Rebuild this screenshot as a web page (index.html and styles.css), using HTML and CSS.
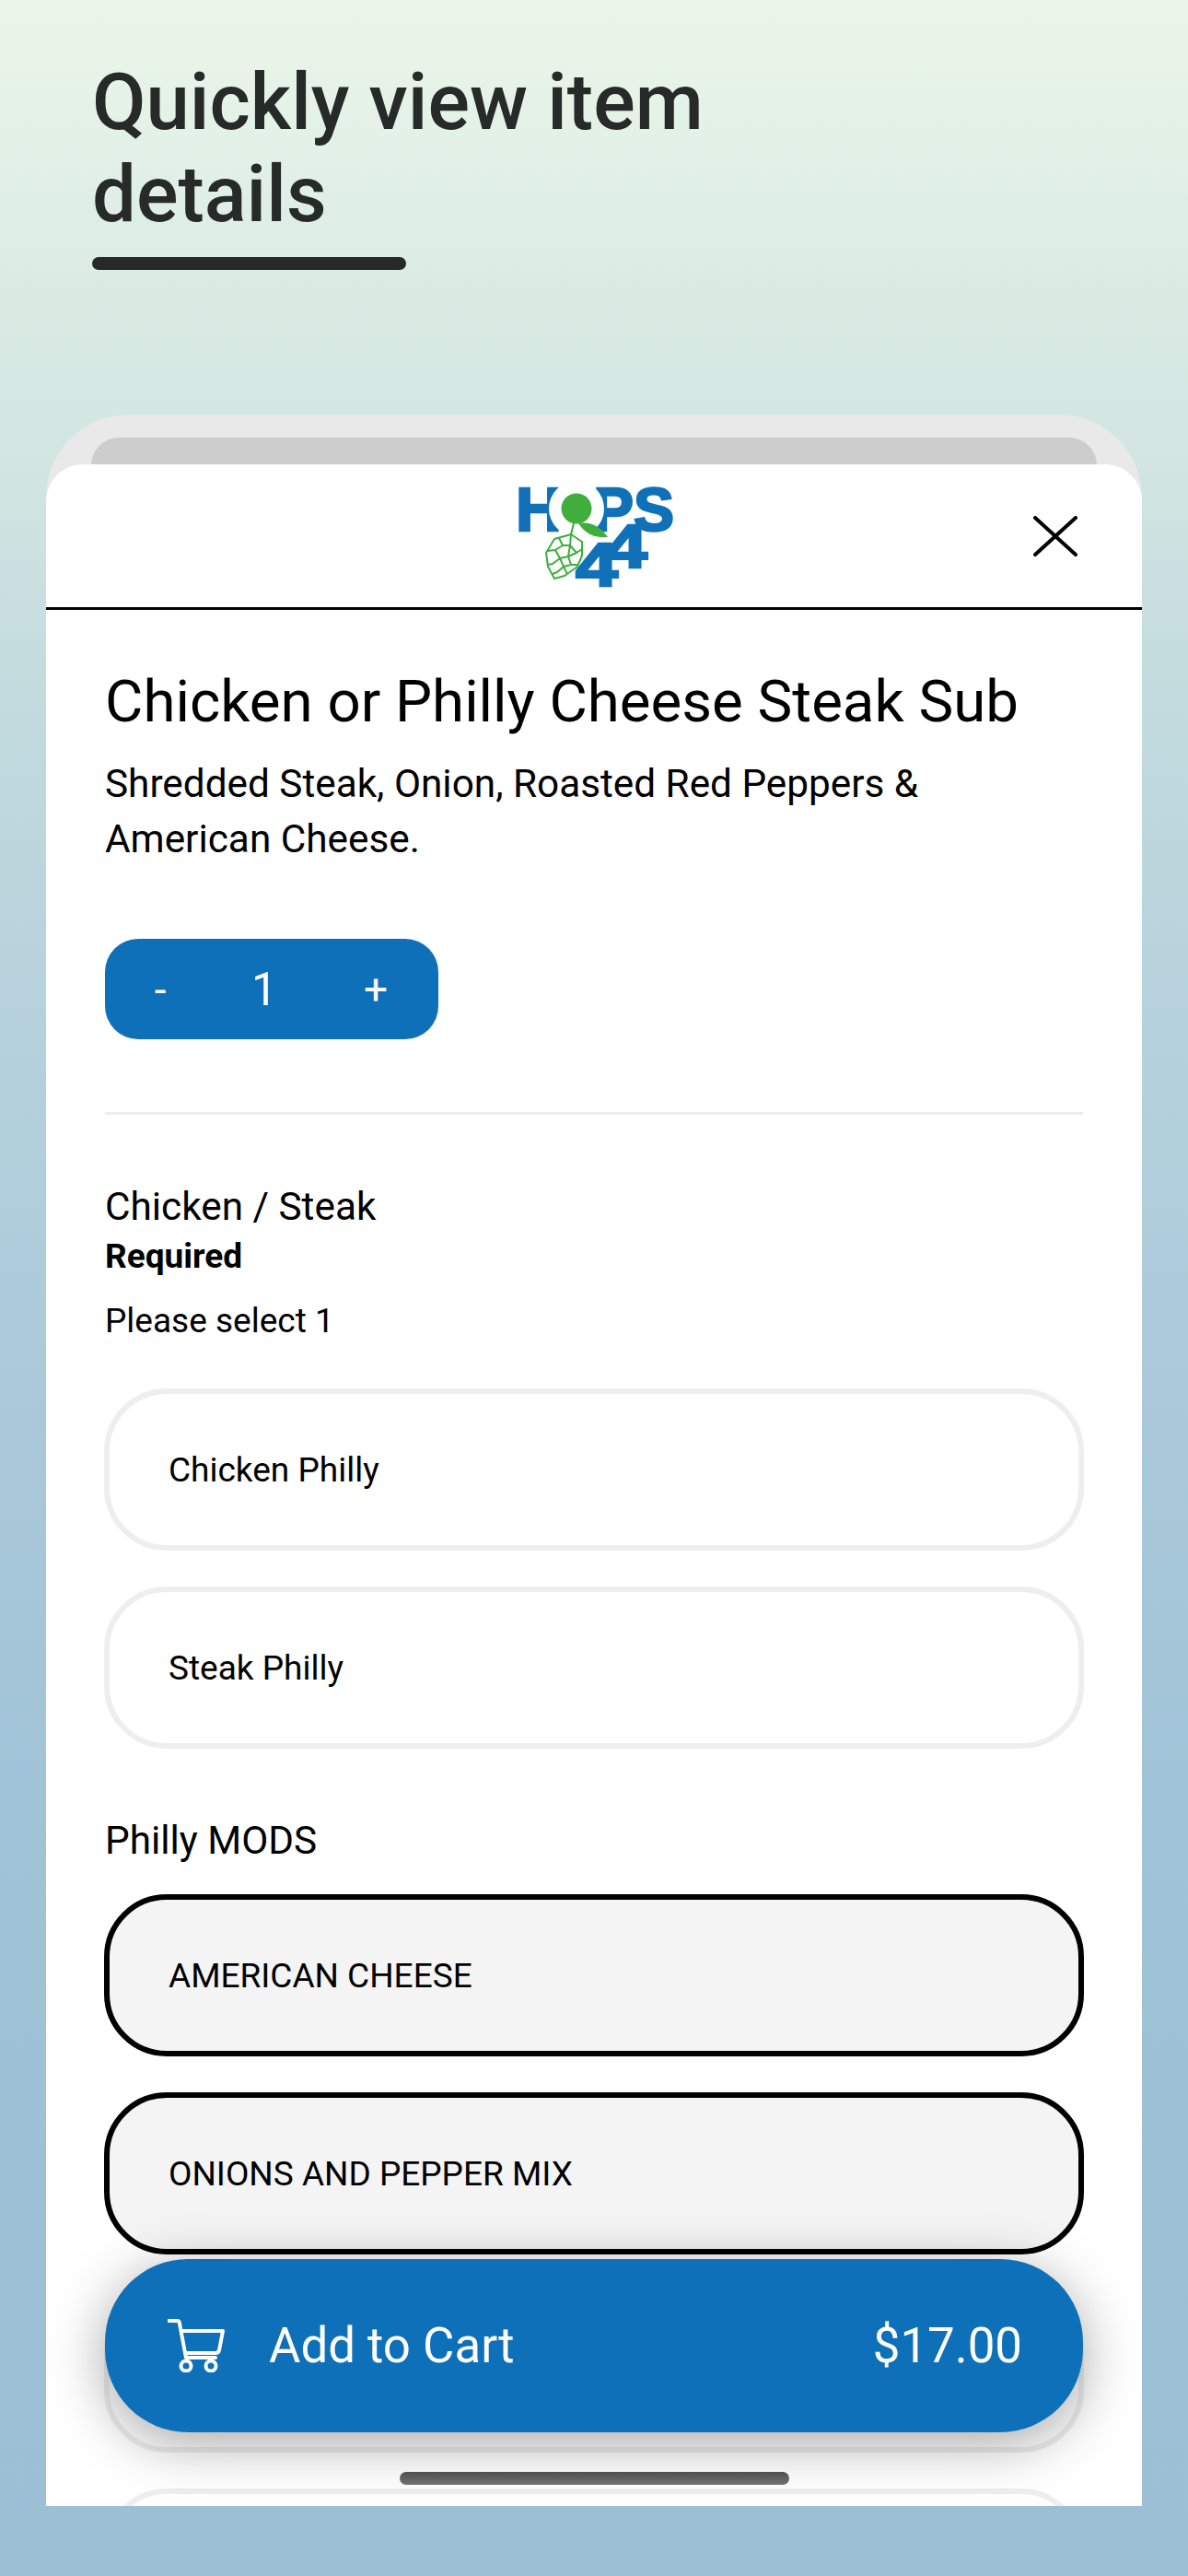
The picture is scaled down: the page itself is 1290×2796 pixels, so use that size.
FILE: index.html
```html
<!DOCTYPE html>
<html lang="en">
<head>
    <meta charset="UTF-8">
    <title>Quickly view item details</title>
    <link rel="stylesheet" href="styles.css">
</head>
<body>
    <header class="promo">
        <h1 class="promo-title">Quickly view item<br>details</h1>
        <div class="promo-rule"></div>
    </header>

    <div class="phone">
        <div class="phone-top">
            <div class="phone-bar"></div>
        </div>

        <main class="sheet">
            <div class="sheet-head">
                <svg class="logo" viewBox="0 0 190 120" width="190" height="120" aria-label="Hops 44">
                    <g class="logo-word">
                        <text x="10" y="56" textLength="50" lengthAdjust="spacingAndGlyphs">H</text>
                        <text x="94" y="56" textLength="88" lengthAdjust="spacingAndGlyphs">PS</text>
                    </g>
                    <circle cx="76" cy="32" r="30" fill="#fff"/>
                    <circle cx="76" cy="32" r="16.500" fill="#3fae3c"/>
                    <g class="logo-word">
                        <text class="logo-four" x="107" y="96" textLength="46" lengthAdjust="spacingAndGlyphs">4</text>
                        <text class="logo-four" x="75" y="116" textLength="46" lengthAdjust="spacingAndGlyphs">4</text>
                    </g>
                    <path class="logo-leaf" d="M78 48 C92 46 102 52 110 63 C96 64 86 60 78 48 Z"/>
                    <path class="logo-stem" d="M73 48 L70 60"/>
                    <g class="logo-cone">
                        <path d="M70 60 L82 68 L82 83 L77 95 L63 105 L52 108 L45 95 L43 80 L52 65 Z"/>
                        <path d="M57 64 L61 72 L69 72 L70 60 M69 72 L76 80 L82 76 M61 72 L53 77 L44 78 M53 77 L58 86 L67 84 L69 72 M67 84 L76 80 M67 84 L70 93 L78 93 M58 86 L50 92 L45 93 M58 86 L62 95 L70 93 M62 95 L55 101 L50 103 M62 95 L66 103"/>
                    </g>
                </svg>
                <button class="close" aria-label="Close">
                    <svg viewBox="0 0 48 44" width="48" height="44">
                        <path d="M2 2 L46 42 M46 2 L2 42"/>
                    </svg>
                </button>
            </div>

            <div class="sheet-body">
                <h2 class="item-title">Chicken or Philly Cheese Steak Sub</h2>
                <p class="item-desc">Shredded Steak, Onion, Roasted Red Peppers &amp; American Cheese.</p>

                <div class="stepper">
                    <span class="step-btn step-minus">-</span>
                    <span class="step-count">1</span>
                    <span class="step-btn step-plus">+</span>
                </div>

                <hr class="divider">

                <h3 class="group-title">Chicken / Steak</h3>
                <div class="group-required">Required</div>
                <div class="group-hint">Please select 1</div>

                <div class="options">
                    <div class="option">Chicken Philly</div>
                    <div class="option">Steak Philly</div>
                </div>

                <h3 class="group-title group-mods">Philly MODS</h3>

                <div class="options">
                    <div class="option selected">AMERICAN CHEESE</div>
                    <div class="option selected">ONIONS AND PEPPER MIX</div>
                    <div class="option"></div>
                    <div class="option"></div>
                </div>
            </div>

            <button class="cart-btn">
                <svg class="cart-icon" viewBox="0 0 62 58" width="62" height="58">
                    <path d="M1 2 H10 C12 2 13 3 13 5 L20 42 H52"/>
                    <path d="M15 13 H60 L56 34 C55.500 36 54 37 52 37 H19"/>
                    <circle cx="20" cy="51" r="5.500"/>
                    <circle cx="47" cy="51" r="5.500"/>
                </svg>
                <span class="cart-label">Add to Cart</span>
                <span class="cart-price">$17.00</span>
            </button>
            <div class="home-bar"></div>
        </main>
    </div>
</body>
</html>
```

FILE: styles.css
```css
* {
    box-sizing: border-box;
}

body {
    margin: 0;
    height: 2796px;
    overflow: hidden;
    font-family: Roboto, 'Liberation Sans', sans-serif;
    background: linear-gradient(to bottom, #ebf6e9 0%, #d0e4e1 19%, #c3dbde 27%, #b5d1dc 40%, #a9c9da 55%, #a1c3d7 70%, #9dc0d6 85%, #9cbfd5 100%);
    color: #000;
}

.promo {
    padding: 61px 0 0 100px;
    height: 450px;
}

.promo-title {
    margin: 0;
    font-size: 85px;
    line-height: 100px;
    font-weight: 500;
    color: #262a28;
}

.promo-rule {
    width: 341px;
    height: 14px;
    margin-top: 18px;
    border-radius: 7px;
    background: #262a28;
}

.phone {
    margin: 0 50px;
}

.phone-top {
    height: 100px;
    margin-bottom: -46px;
    padding: 25px 49px 0;
    border-radius: 90px 90px 0 0;
    background: #e9e9e9;
}

.phone-bar {
    height: 75px;
    border-radius: 30px 30px 0 0;
    background: #cdcdcd;
}

.sheet {
    position: relative;
    height: 2216px;
    overflow: hidden;
    border-radius: 40px 40px 0 0;
    background: #fff;
}

.sheet-head {
    position: relative;
    display: flex;
    justify-content: center;
    height: 158px;
    padding-top: 16px;
    border-bottom: 3px solid #000;
}

.logo-word text {
    font-family: 'Liberation Sans', sans-serif;
    font-weight: 700;
    font-size: 66px;
    fill: #1071b9;
    stroke: #1071b9;
    stroke-width: 2.500;
}

.logo-leaf {
    fill: #3fae3c;
}

.logo-stem {
    fill: none;
    stroke: #3fae3c;
    stroke-width: 2;
}

.logo-cone path {
    fill: #fff;
    stroke: #3fae3c;
    stroke-width: 2;
    stroke-linejoin: round;
}

.logo-cone path + path {
    fill: none;
}

.close {
    position: absolute;
    top: 56px;
    right: 70px;
    padding: 0;
    border: none;
    background: none;
}

.close svg {
    display: block;
}

.close path {
    fill: none;
    stroke: #000;
    stroke-width: 4;
    stroke-linecap: round;
}

.sheet-body {
    padding: 0 64px;
}

.item-title {
    margin: 64px 0 0;
    font-size: 63.600px;
    line-height: 72px;
    font-weight: 400;
}

.item-desc {
    margin: 23px 0 0;
    font-size: 42.300px;
    line-height: 60px;
}

.stepper {
    display: flex;
    align-items: center;
    width: 362px;
    height: 109px;
    margin-top: 78px;
    border-radius: 36px;
    background: #0e70b8;
    color: #fff;
}

.step-btn {
    font-size: 46px;
    line-height: 1;
    text-align: center;
}

.step-minus {
    width: 120px;
}

.step-count {
    flex: 1;
    font-size: 50px;
    text-align: center;
}

.step-plus {
    width: 136px;
}

.divider {
    height: 3px;
    margin: 79px 0 0;
    border: none;
    background: #eeeeee;
}

.group-title {
    margin: 76px 0 0;
    font-size: 42.300px;
    line-height: 48px;
    font-weight: 400;
}

.group-required {
    margin-top: 9px;
    font-size: 37px;
    line-height: 42px;
    font-weight: 700;
}

.group-hint {
    margin-top: 28px;
    font-size: 37px;
    line-height: 42px;
}

.options {
    display: flex;
    flex-direction: column;
    gap: 39px;
    margin: 52px -1px 0;
}

.option {
    display: flex;
    align-items: center;
    height: 176px;
    padding-left: 64px;
    border: 6px solid #eeeeee;
    border-radius: 68px;
    background: #fff;
    font-size: 37px;
    flex-shrink: 0;
}

.option.selected {
    border-color: #000;
    background: #f4f4f4;
}

.group-mods {
    margin-top: 76px;
}

.group-mods + .options {
    margin-top: 34px;
}

.cart-btn {
    position: absolute;
    top: 1948px;
    left: 64px;
    display: flex;
    align-items: center;
    width: 1062px;
    height: 188px;
    padding: 0 66px 0 68px;
    border: none;
    border-radius: 90px;
    background: #0e70b8;
    box-shadow: 0 12px 60px rgba(0, 0, 0, 0.35);
    color: #fff;
    font-family: inherit;
    font-size: 52.800px;
}

.cart-icon {
    margin-right: 48px;
}

.cart-icon path,
.cart-icon circle {
    fill: none;
    stroke: #fff;
    stroke-width: 4;
    stroke-linecap: round;
    stroke-linejoin: round;
}

.cart-price {
    margin-left: auto;
}

.home-bar {
    position: absolute;
    top: 2179px;
    left: 384px;
    width: 423px;
    height: 14px;
    border-radius: 7px;
    background: linear-gradient(to bottom, #4f4f4f, #707070);
}
```
